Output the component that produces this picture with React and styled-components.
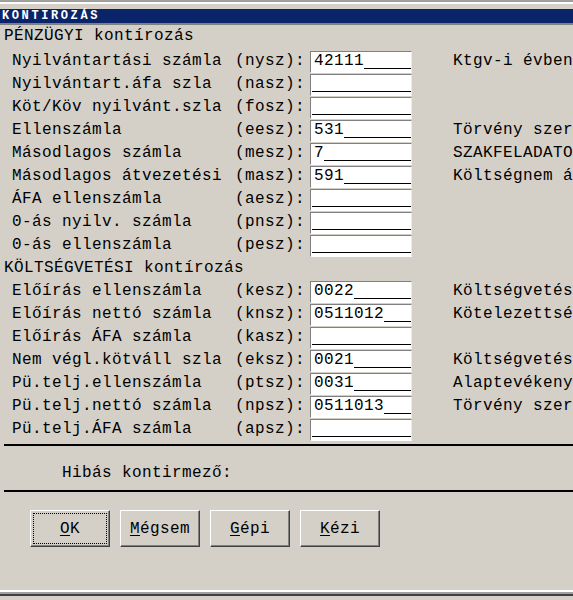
import React from 'react';
import styled, { createGlobalStyle } from 'styled-components';

const GlobalStyle = createGlobalStyle`
  html, body {
    margin: 0;
    padding: 0;
    background: #d4d0c8;
    overflow: hidden;
  }
`;

const financial = [
  ['Nyilvántartási számla', 'nysz', '42111', 'Ktgv-i évben'],
  ['Nyilvántart.áfa szla', 'nasz', '', ''],
  ['Köt/Köv nyilvánt.szla', 'fosz', '', ''],
  ['Ellenszámla', 'eesz', '531', 'Törvény szer'],
  ['Másodlagos számla', 'mesz', '7', 'SZAKFELADATO'],
  ['Másodlagos átvezetési', 'masz', '591', 'Költségnem á'],
  ['ÁFA ellenszámla', 'aesz', '', ''],
  ['0-ás nyilv. számla', 'pnsz', '', ''],
  ['0-ás ellenszámla', 'pesz', '', '']
];

const budget = [
  ['Előírás ellenszámla', 'kesz', '0022', 'Költségvetés'],
  ['Előírás nettó számla', 'knsz', '0511012', 'Kötelezettsé'],
  ['Előírás ÁFA számla', 'kasz', '', ''],
  ['Nem végl.kötváll szla', 'eksz', '0021', 'Költségvetés'],
  ['Pü.telj.ellenszámla', 'ptsz', '0031', 'Alaptevékeny'],
  ['Pü.telj.nettó számla', 'npsz', '0511013', 'Törvény szer'],
  ['Pü.telj.ÁFA számla', 'apsz', '', '']
];

const Row = ({ label, code, value, desc }) => (
  <FieldRow>
    <Label>{label}</Label>
    <Label>({code}):</Label>
    <Field>
      {value && <Value>{value}</Value>}
      <Blank />
    </Field>
    <Description>{desc}</Description>
  </FieldRow>
);

const App = () => {
  return (
    <Window>
      <GlobalStyle />
      <TopEdge />
      <TitleBar>KONTIROZÁS</TitleBar>
      <SectionTitle $first>PÉNZÜGYI kontírozás</SectionTitle>
      {financial.map(([label, code, value, desc]) => (
        <Row key={code} label={label} code={code} value={value} desc={desc} />
      ))}
      <SectionTitle>KÖLTSÉGVETÉSI kontírozás</SectionTitle>
      {budget.map(([label, code, value, desc]) => (
        <Row key={code} label={label} code={code} value={value} desc={desc} />
      ))}
      <Divider $top={3} />
      <ErrorLine>Hibás kontirmező:</ErrorLine>
      <Divider />
      <ButtonBar>
        <Button $focused><u>O</u>K</Button>
        <Button><u>M</u>égsem</Button>
        <Button><u>G</u>épi</Button>
        <Button><u>K</u>ézi</Button>
      </ButtonBar>
      <Spacer />
      <BottomEdge />
    </Window>
  );
};

export default App;

const mono = `
  font-family: "Liberation Mono", "DejaVu Sans Mono", monospace;
  font-size: 16px;
  letter-spacing: 0.4px;
  color: #000000;
`;

const Window = styled.div`
  width: 573px;
  height: 600px;
  display: flex;
  flex-direction: column;
  background: #d4d0c8;
  overflow: hidden;
  ${mono}
`;

const TopEdge = styled.div`
  border-top: 2px solid #a0a0a0;
  border-bottom: 2px solid #ffffff;
  margin-bottom: 5px;
`;

const TitleBar = styled.div`
  height: 14px;
  line-height: 15px;
  background: #0a246a;
  border-bottom: 2px solid #808080;
  color: #ffffff;
  font-family: "Liberation Mono", monospace;
  font-weight: bold;
  font-size: 12px;
  letter-spacing: 2.6px;
  padding-left: 2px;
`;

const SectionTitle = styled.div`
  height: ${(p) => (p.$first ? 25 : 23)}px;
  line-height: 23px;
  padding-left: 4px;
  white-space: nowrap;
`;

const FieldRow = styled.div`
  display: grid;
  grid-template-columns: 223px 75px 102px 1fr;
  height: 23px;
  padding-left: 12px;
  white-space: nowrap;
`;

const Label = styled.span`
  line-height: 23px;
`;

const Field = styled.span`
  align-self: end;
  display: flex;
  align-items: flex-end;
  box-sizing: border-box;
  height: 22px;
  background: #ffffff;
  border-top: 1px solid #808080;
  border-left: 1px solid #808080;
  border-bottom: 1px solid #ffffff;
  border-right: 1px solid #ececec;
  padding: 0 0 2px 1px;
`;

const Value = styled.span`
  line-height: 17px;
  padding-left: 2px;
`;

const Blank = styled.span`
  flex: 1;
  height: 0;
  border-bottom: 1px solid #000000;
  margin-bottom: 1px;
`;

const Description = styled.span`
  line-height: 23px;
  padding-left: 41px;
`;

const Divider = styled.div`
  height: 2px;
  margin: ${(p) => p.$top || 0}px 0 0 4px;
  background: #000000;
`;

const ErrorLine = styled.div`
  height: 44px;
  box-sizing: border-box;
  padding: 16px 0 0 62px;
  line-height: 23px;
`;

const ButtonBar = styled.div`
  display: flex;
  gap: 10px;
  padding: 18px 0 0 30px;
`;

const Button = styled.button`
  width: 80px;
  height: 37px;
  padding: 0;
  background: #d4d0c8;
  border: 1px solid;
  border-color: #ffffff #404040 #404040 #ffffff;
  box-shadow: inset -1px -1px 0 #808080;
  outline: ${(p) => (p.$focused ? '1px dotted #000000' : 'none')};
  outline-offset: -4px;
  ${mono}

  u {
    text-decoration-thickness: 1px;
    text-underline-offset: 2px;
  }
`;

const Spacer = styled.div`
  flex: 1;
`;

const BottomEdge = styled.div`
  height: 2px;
  background: #a0a0a0;
  border-top: 2px solid #ffffff;
  border-bottom: 2px solid #404040;
  margin-bottom: 4px;
`;
